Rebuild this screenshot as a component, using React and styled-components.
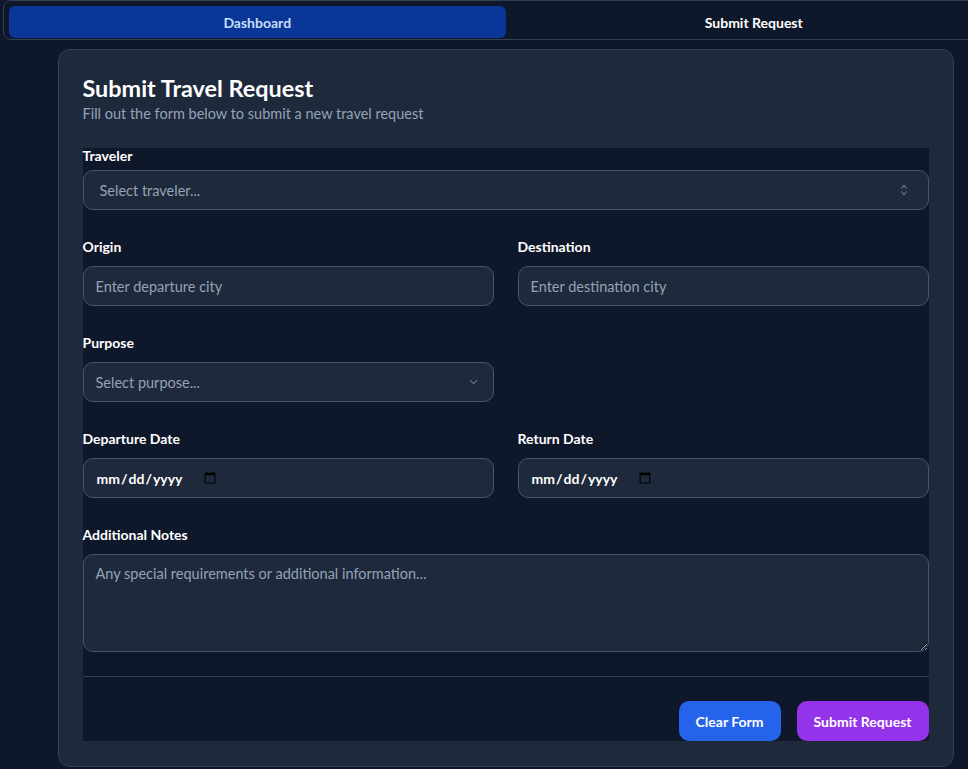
import React, { useState } from "react";
import styled, { createGlobalStyle } from "styled-components";

const GlobalStyle = createGlobalStyle`
  html, body {
    margin: 0;
    padding: 0;
    background: #0f172a;
    overflow: hidden;
  }
  body {
    font-family: Lato, "Noto Sans", sans-serif;
    color: #f8fafc;
  }
  * { box-sizing: border-box; }
`;

const Page = styled.div`
  width: 1011px;
  min-height: 769px;
  background: #0f172a;
  padding: 0 3px;
`;

const TabBar = styled.div`
  display: grid;
  grid-template-columns: 1fr 1fr;
  height: 40px;
  padding: 5px 5px 1px;
  border: 1px solid #334155;
  border-radius: 8px;
  background: #0f172a;
`;

const Tab = styled.button`
  border: none;
  border-radius: 6px;
  font-family: inherit;
  font-size: 14px;
  font-weight: 700;
  cursor: pointer;
  background: ${({ active }) => (active ? "#0a3697" : "transparent")};
  color: ${({ active }) => (active ? "#c9defc" : "#ffffff")};
`;

const Card = styled.div`
  width: 896px;
  margin: 9px auto 0;
  background: #1e293b;
  border: 1px solid #334155;
  border-radius: 12px;
  padding: 23px 24px 25px;
`;

const Title = styled.h1`
  margin: 0;
  font-size: 23.4px;
  line-height: 30px;
  font-weight: 700;
  color: #ffffff;
`;

const Subtitle = styled.p`
  margin: 1px 0 24px;
  font-size: 14.5px;
  line-height: 20px;
  font-weight: 400;
  color: #94a3b8;
`;

const Form = styled.form`
  background: #0f172a;
  display: flex;
  flex-direction: column;
  gap: 27px;
`;

const Row = styled.div`
  display: grid;
  grid-template-columns: 1fr 1fr;
  gap: 24px;
`;

const Field = styled.div`
  display: flex;
  flex-direction: column;
`;

const Label = styled.label`
  font-size: 14px;
  line-height: ${({ tight }) => (tight ? "16px" : "20px")};
  font-weight: 700;
  color: #ffffff;
  margin-bottom: ${({ tight }) => (tight ? "6px" : "9px")};
`;

const fieldBase = `
  width: 100%;
  height: 40px;
  background: #1e293b;
  border: 1px solid #475569;
  border-radius: 10px;
  font-family: Lato, "Noto Sans", sans-serif;
  font-size: 14.5px;
  font-weight: 400;
  color: #f8fafc;
  outline: none;
  color-scheme: light;
  &::placeholder { color: #94a3b8; }
`;

const Input = styled.input`
  ${fieldBase}
  padding: 0 12px;
`;

const DateInput = styled.input`
  ${fieldBase}
  padding: 0 12px;
  font-size: 14px;
  font-weight: 700;
  color: #ffffff;
  display: flex;
  &::-webkit-datetime-edit { padding: 0; flex: 0 0 auto; }
  &::-webkit-datetime-edit-fields-wrapper { padding: 0; }
  &::-webkit-calendar-picker-indicator { margin-left: -3px; }
`;

const SelectWrap = styled.div`
  position: relative;
`;

const Select = styled.select`
  ${fieldBase}
  appearance: none;
  padding: 0 ${({ wide }) => (wide ? "16px" : "12px")};
  color: #94a3b8;
`;

const SelectIcon = styled.span`
  position: absolute;
  right: ${({ wide }) => (wide ? "18px" : "14px")};
  top: 50%;
  transform: translateY(-50%);
  display: flex;
  color: #64748b;
  pointer-events: none;
`;

const TextArea = styled.textarea`
  ${fieldBase}
  height: 98px;
  padding: 9px 12px;
  resize: vertical;
  line-height: 20px;
`;

const Footer = styled.div`
  border-top: 1px solid #334155;
  padding-top: 24px;
  margin-top: -3px;
  display: flex;
  justify-content: flex-end;
  gap: 16px;
`;

const Button = styled.button`
  height: 40px;
  padding: 0 17px;
  border: none;
  border-radius: 10px;
  font-family: inherit;
  font-size: 14px;
  font-weight: 700;
  color: #ffffff;
  cursor: pointer;
  background: ${({ variant }) => (variant === "purple" ? "#9333ea" : "#2563eb")};
`;

const UpDown = () => (
  <svg width="14" height="14" viewBox="0 0 24 24" fill="none" stroke="currentColor" strokeWidth="2" strokeLinecap="round" strokeLinejoin="round">
    <path d="m8 15 4 5 4-5" />
    <path d="m8 9 4-5 4 5" />
  </svg>
);

const Down = () => (
  <svg width="13" height="13" viewBox="0 0 24 24" fill="none" stroke="currentColor" strokeWidth="2" strokeLinecap="round" strokeLinejoin="round">
    <path d="m6 9 6 6 6-6" />
  </svg>
);

export default function App() {
  const [tab, setTab] = useState("dashboard");

  return (
    <Page>
      <GlobalStyle />
      <TabBar>
        <Tab active={tab === "dashboard"} onClick={() => setTab("dashboard")}>Dashboard</Tab>
        <Tab active={tab === "submit"} onClick={() => setTab("submit")}>Submit Request</Tab>
      </TabBar>
      <Card>
        <Title>Submit Travel Request</Title>
        <Subtitle>Fill out the form below to submit a new travel request</Subtitle>
        <Form onSubmit={(e) => e.preventDefault()}>
          <Field>
            <Label tight>Traveler</Label>
            <SelectWrap>
              <Select wide defaultValue="">
                <option value="" disabled>Select traveler...</option>
              </Select>
              <SelectIcon wide><UpDown /></SelectIcon>
            </SelectWrap>
          </Field>
          <Row>
            <Field>
              <Label>Origin</Label>
              <Input placeholder="Enter departure city" />
            </Field>
            <Field>
              <Label>Destination</Label>
              <Input placeholder="Enter destination city" />
            </Field>
          </Row>
          <Row>
            <Field>
              <Label>Purpose</Label>
              <SelectWrap>
                <Select defaultValue="">
                  <option value="" disabled>Select purpose...</option>
                </Select>
                <SelectIcon><Down /></SelectIcon>
              </SelectWrap>
            </Field>
          </Row>
          <Row>
            <Field>
              <Label>Departure Date</Label>
              <DateInput type="date" />
            </Field>
            <Field>
              <Label>Return Date</Label>
              <DateInput type="date" />
            </Field>
          </Row>
          <Field>
            <Label>Additional Notes</Label>
            <TextArea placeholder="Any special requirements or additional information..." />
          </Field>
          <Footer>
            <Button type="button">Clear Form</Button>
            <Button type="submit" variant="purple">Submit Request</Button>
          </Footer>
        </Form>
      </Card>
    </Page>
  );
}
